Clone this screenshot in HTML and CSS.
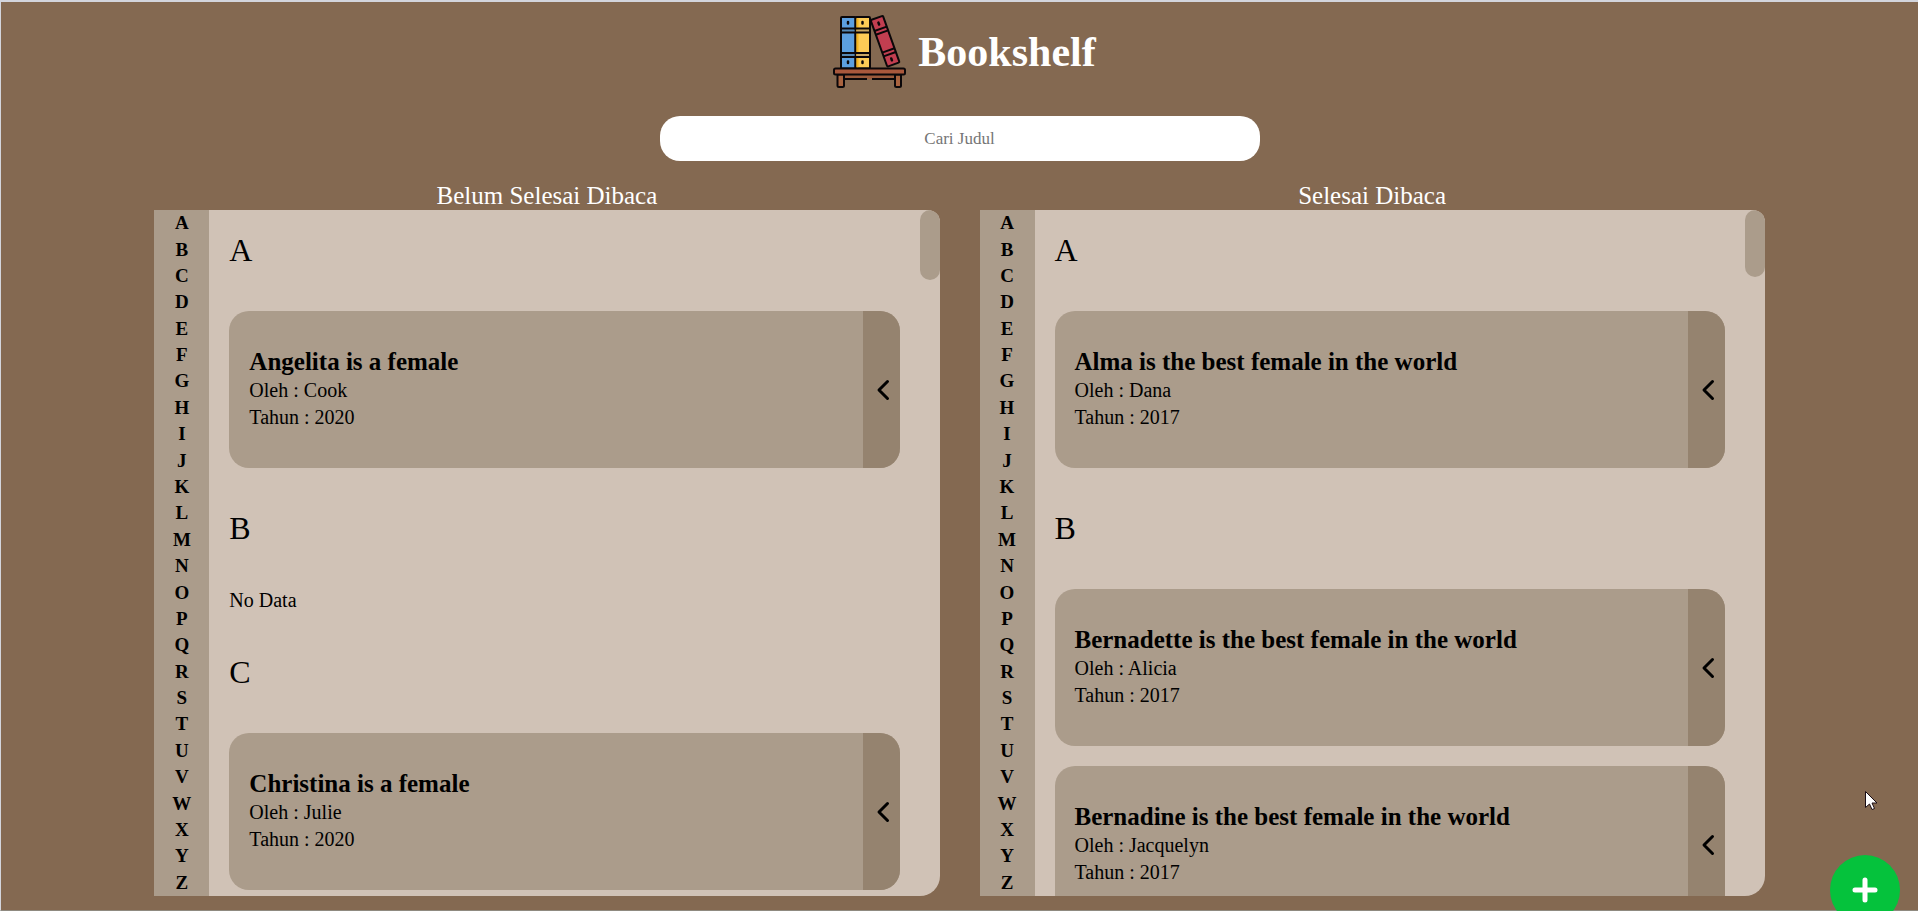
FILE: index.html
```html
<!DOCTYPE html>
<html lang="id">
<head>
<meta charset="utf-8">
<title>Bookshelf</title>
<link rel="stylesheet" href="styles.css">
</head>
<body>
<svg class="defs" aria-hidden="true">
  <symbol id="chevron" viewBox="0 0 14 22"><path d="M11.500 2.500 3 11l8.500 8.500" fill="none" stroke="#000" stroke-width="3" stroke-linecap="round" stroke-linejoin="round"/></symbol>
</svg>
<header class="header">
  <svg class="logo" viewBox="0 0 75 75" aria-hidden="true">
    <g stroke="#0b0709" stroke-width="2" stroke-linejoin="round">
      <rect x="8" y="3" width="14.500" height="51.500" rx="1" fill="#5c9fe0"/>
      <rect x="22.500" y="3" width="14.500" height="51.500" rx="1" fill="#fdcb56"/>
      <path d="M24.500 4.500v49" stroke="#f3b41f" fill="none"/>
      <path d="M9 17h12.500M9 41h12.500" stroke="#5688b4" stroke-width="3" fill="none"/>
      <path d="M23.500 17H36M23.500 41H36" stroke="#c9a764" stroke-width="3" fill="none"/>
      <path d="M8 14.500h29M8 18.500h29M8 39h29M8 43h29" fill="none"/>
      <g transform="rotate(-19.700 52 27)">
        <rect x="45.500" y="2.500" width="13" height="49.500" rx="1" fill="#c23e50"/>
        <path d="M45.500 14h13M45.500 18h13M45.500 37h13M45.500 41h13" fill="none"/>
        <path d="M52 7.500v2M52 45.500v2" stroke-width="2.500" stroke-linecap="round"/>
      </g>
      <path d="M15 8v1.500M29.500 8v1.500M15 47.500v1.500M29.500 47.500v1.500" stroke-width="2.500" stroke-linecap="round" fill="none"/>
      <path d="M11 61h52v4H11z" fill="#9c5b3c" stroke="none"/>
      <path d="M11 65h23M39 65h24" fill="none"/>
      <path d="M4.500 60.500h6.500v11q0 1.500-1.500 1.500H6q-1.500 0-1.500-1.500zM62 60.500h6v11q0 1.500-1.500 1.500h-3q-1.500 0-1.500-1.500z" fill="#a9633f"/>
      <rect x="1" y="54.500" width="71" height="6" rx="1.500" fill="#a9583c"/>
    </g>
  </svg>
  <h1 class="title">Bookshelf</h1>
</header>
<form class="search" role="search">
  <input class="search-input" type="text" placeholder="Cari Judul" aria-label="Cari Judul">
</form>
<main class="shelves">
  <section class="shelf">
    <h2 class="shelf-title">Belum Selesai Dibaca</h2>
    <div class="panel">
      <nav class="index" aria-label="Indeks belum selesai dibaca">
        <a href="#u-A">A</a><a href="#u-B">B</a><a href="#u-C">C</a><a href="#u-D">D</a><a href="#u-E">E</a><a href="#u-F">F</a><a href="#u-G">G</a><a href="#u-H">H</a><a href="#u-I">I</a><a href="#u-J">J</a><a href="#u-K">K</a><a href="#u-L">L</a><a href="#u-M">M</a><a href="#u-N">N</a><a href="#u-O">O</a><a href="#u-P">P</a><a href="#u-Q">Q</a><a href="#u-R">R</a><a href="#u-S">S</a><a href="#u-T">T</a><a href="#u-U">U</a><a href="#u-V">V</a><a href="#u-W">W</a><a href="#u-X">X</a><a href="#u-Y">Y</a><a href="#u-Z">Z</a>
      </nav>
      <div class="list">
        <section class="group" id="u-A">
          <h3 class="letter">A</h3>
          <article class="card">
            <div class="card-body"><h4 class="card-title">Angelita is a female</h4><p class="meta">Oleh : Cook</p><p class="meta">Tahun : 2020</p></div>
            <button class="toggle" type="button" aria-label="Menu"><svg class="chevron"><use href="#chevron"/></svg></button>
          </article>
        </section>
        <section class="group" id="u-B">
          <h3 class="letter">B</h3>
          <p class="empty">No Data</p>
        </section>
        <section class="group" id="u-C">
          <h3 class="letter">C</h3>
          <article class="card">
            <div class="card-body"><h4 class="card-title">Christina is a female</h4><p class="meta">Oleh : Julie</p><p class="meta">Tahun : 2020</p></div>
            <button class="toggle" type="button" aria-label="Menu"><svg class="chevron"><use href="#chevron"/></svg></button>
          </article>
        </section>
      </div>
      <div class="thumb thumb-unread"></div>
    </div>
  </section>
  <section class="shelf">
    <h2 class="shelf-title">Selesai Dibaca</h2>
    <div class="panel">
      <nav class="index" aria-label="Indeks selesai dibaca">
        <a href="#r-A">A</a><a href="#r-B">B</a><a href="#r-C">C</a><a href="#r-D">D</a><a href="#r-E">E</a><a href="#r-F">F</a><a href="#r-G">G</a><a href="#r-H">H</a><a href="#r-I">I</a><a href="#r-J">J</a><a href="#r-K">K</a><a href="#r-L">L</a><a href="#r-M">M</a><a href="#r-N">N</a><a href="#r-O">O</a><a href="#r-P">P</a><a href="#r-Q">Q</a><a href="#r-R">R</a><a href="#r-S">S</a><a href="#r-T">T</a><a href="#r-U">U</a><a href="#r-V">V</a><a href="#r-W">W</a><a href="#r-X">X</a><a href="#r-Y">Y</a><a href="#r-Z">Z</a>
      </nav>
      <div class="list">
        <section class="group" id="r-A">
          <h3 class="letter">A</h3>
          <article class="card">
            <div class="card-body"><h4 class="card-title">Alma is the best female in the world</h4><p class="meta">Oleh : Dana</p><p class="meta">Tahun : 2017</p></div>
            <button class="toggle" type="button" aria-label="Menu"><svg class="chevron"><use href="#chevron"/></svg></button>
          </article>
        </section>
        <section class="group" id="r-B">
          <h3 class="letter">B</h3>
          <article class="card">
            <div class="card-body"><h4 class="card-title">Bernadette is the best female in the world</h4><p class="meta">Oleh : Alicia</p><p class="meta">Tahun : 2017</p></div>
            <button class="toggle" type="button" aria-label="Menu"><svg class="chevron"><use href="#chevron"/></svg></button>
          </article>
          <article class="card">
            <div class="card-body"><h4 class="card-title">Bernadine is the best female in the world</h4><p class="meta">Oleh : Jacquelyn</p><p class="meta">Tahun : 2017</p></div>
            <button class="toggle" type="button" aria-label="Menu"><svg class="chevron"><use href="#chevron"/></svg></button>
          </article>
        </section>
      </div>
      <div class="thumb thumb-read"></div>
    </div>
  </section>
</main>
<button class="add" type="button" aria-label="Tambah buku"><svg width="26" height="26" viewBox="0 0 26 26"><path d="M13 3v20M3 13h20" stroke="#fff" stroke-width="5" stroke-linecap="round"/></svg></button>
<svg class="pointer" width="13" height="20" viewBox="0 0 13 20" aria-hidden="true"><path d="M.5.500v16l4-3.500 2.500 5.500 2.500-1-2.500-5.500h5z" fill="#fff" stroke="#1a0d14"/></svg>
</body>
</html>
```
FILE: styles.css
```css
* { box-sizing: border-box; margin: 0; }

body {
  display: flex;
  flex-direction: column;
  height: 100vh;
  overflow: hidden;
  padding-bottom: 14px;
  border: solid #d3d5dc;
  border-width: 2px 0 0 1px;
  border-bottom: 1px solid #8f8a80;
  background: #846951;
  color: #000;
  font-family: "Gentium Book Basic", "Liberation Serif", serif;
  font-size: 20px;
}

.defs { position: absolute; width: 0; height: 0; }

.header {
  display: flex;
  justify-content: center;
  align-items: center;
  gap: 10px;
  padding: 12px 0 12px 10px;
  color: #fff;
}
.logo { width: 75px; height: 75px; }
.title { font-size: 42px; line-height: 48px; }

.search { display: flex; justify-content: center; padding: 15px 0 20px; }
.search-input {
  width: 600px;
  height: 45px;
  border: 0;
  border-radius: 20px;
  background: #fff;
  font-family: inherit;
  font-size: 17px;
  text-align: center;
}
.search-input::placeholder { color: #757575; }

.shelves {
  display: flex;
  gap: 40px;
  flex: 1;
  min-height: 0;
  padding: 0 8%;
}
.shelf { flex: 1; display: flex; flex-direction: column; min-width: 0; }
.shelf-title {
  color: #fff;
  font-size: 25px;
  font-weight: 400;
  line-height: 29px;
  text-align: center;
}

.panel {
  position: relative;
  display: flex;
  flex: 1;
  min-height: 0;
  overflow: hidden;
  border-radius: 0 12px 20px 0;
  background: #d0c2b6;
}
.index {
  display: grid;
  grid-auto-rows: 1fr;
  flex: none;
  width: 55px;
  background: #ab9c8b;
}
.index a {
  display: flex;
  align-items: center;
  justify-content: center;
  min-height: 0;
  color: #000;
  font-size: 19px;
  font-weight: 700;
  line-height: 20px;
  text-decoration: none;
}
.list { flex: 1; padding: 0 40px 0 20px; overflow: hidden; }
.letter { padding: 20px 0 40px; font-size: 32px; font-weight: 400; line-height: 41px; }
.empty { margin-bottom: 20px; line-height: 23px; }

.card {
  display: flex;
  margin-bottom: 20px;
  overflow: hidden;
  border-radius: 20px;
  background: #ab9c8b;
}
.card-body { flex: 1; padding: 35px 20px 37px; }
.card-title { font-size: 25px; line-height: 31px; }
.meta { line-height: 27px; }
.toggle {
  display: flex;
  align-items: center;
  justify-content: center;
  width: 37px;
  padding: 0 0 0 3px;
  border: 0;
  background: #95836f;
}
.chevron { width: 14px; height: 22px; }

.thumb {
  position: absolute;
  top: 0;
  right: 0;
  width: 20px;
  border-radius: 10px;
  background: #ab9c8b;
}
.thumb-unread { height: 70px; }
.thumb-read { height: 67px; }

.add {
  position: fixed;
  right: 18px;
  bottom: -14px;
  display: flex;
  align-items: center;
  justify-content: center;
  width: 70px;
  height: 70px;
  padding: 0;
  border: 0;
  border-radius: 50%;
  background: #05c23c;
}
.pointer { position: fixed; right: 40px; bottom: 100px; }
```
